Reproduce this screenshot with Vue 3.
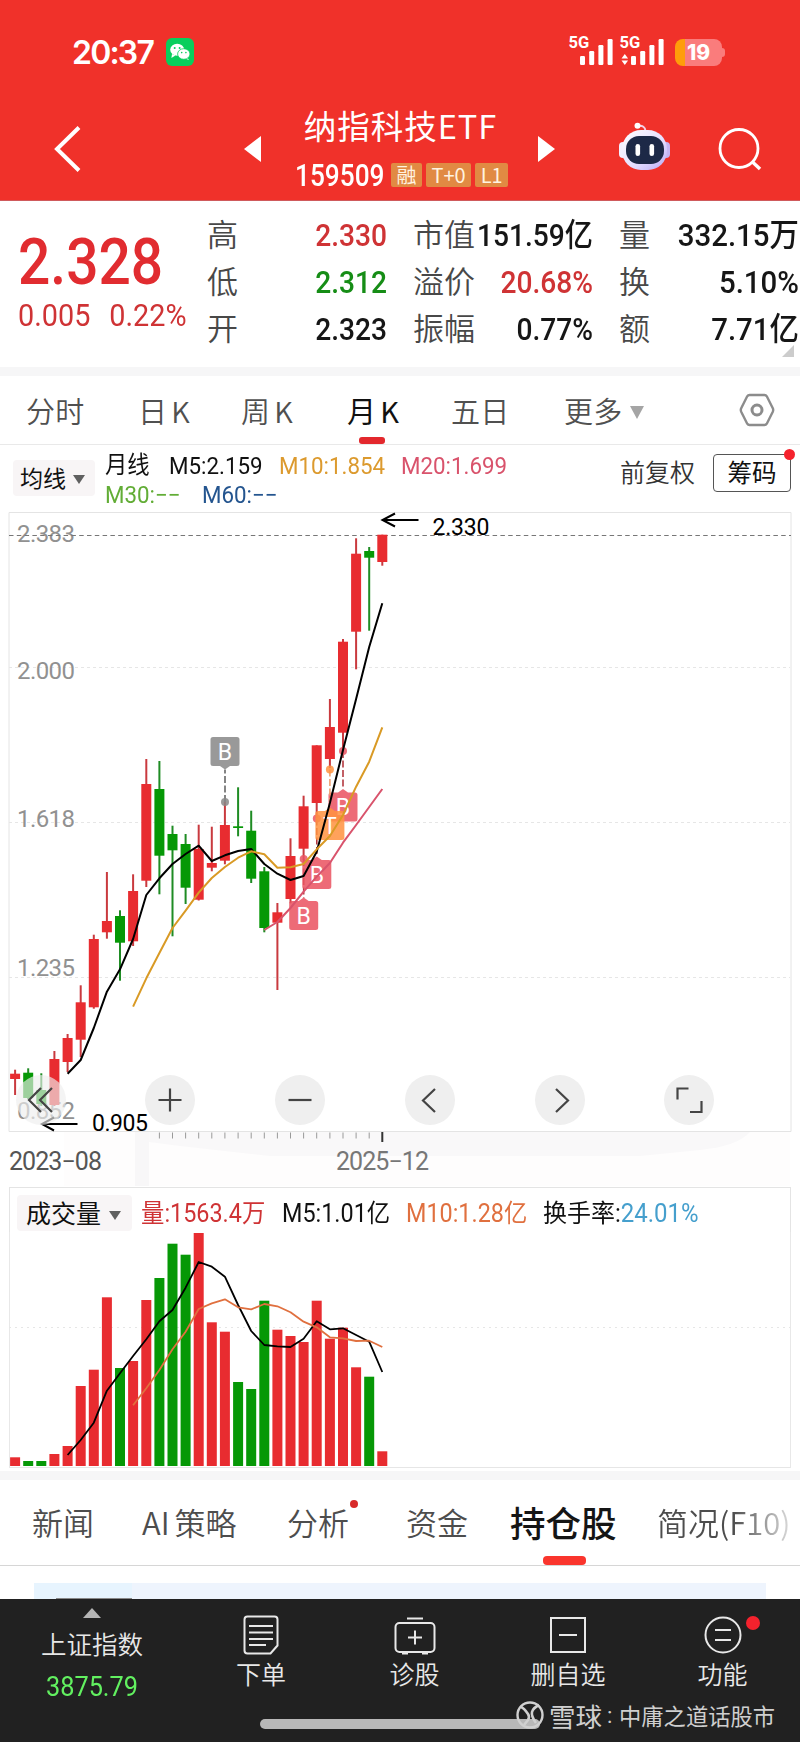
<template>
  <div class="page">
    <header class="header">
      <div class="status-bar">
        <span class="clock">20:37</span>
        <svg class="wechat" width="28" height="28" viewBox="0 0 28 28">
          <rect width="28" height="28" rx="6" fill="#08ce5c" />
          <ellipse cx="11.2" cy="11.8" rx="7" ry="6" fill="#fff" />
          <path d="M6 16l-.6 4 4-2.6zM21 19l2 3-4-1.6z" fill="#fff" />
          <ellipse cx="17.8" cy="16" rx="6.2" ry="5.3" fill="#fff" stroke="#08ce5c" stroke-width=".8" />
          <g fill="#08ce5c">
            <circle cx="8.7" cy="10" r="1" />
            <circle cx="13.6" cy="10" r="1" />
            <circle cx="15.7" cy="14.6" r=".8" />
            <circle cx="19.9" cy="14.6" r=".8" />
          </g>
        </svg>
        <svg class="signals" width="100" height="44" viewBox="564 29 100 44">
          <g fill="#fff">
            <text x="568.5" y="47.5" class="net">5G</text>
            <text x="619.5" y="47.5" class="net">5G</text>
            <template v-for="offset in [580, 631]" :key="offset">
              <rect
                v-for="(top, i) in [56, 51, 45, 39]"
                :key="i"
                :x="offset + i * 9.2"
                :y="top"
                width="5"
                :height="65 - top"
                rx="1.2"
              />
            </template>
            <path d="M621.5 58.5l3.3-4.5 3.3 4.5zM621.5 60.5l3.3 4.5 3.3-4.5z" />
          </g>
        </svg>
        <div class="battery"><span>19</span></div>
      </div>

      <div class="nav">
        <svg class="back" width="30" height="50" viewBox="0 0 30 50">
          <path d="M26 3.500L4 25L26 46.500" fill="none" stroke="#fff" stroke-width="4" />
        </svg>
        <svg class="prev" width="18" height="28" viewBox="0 0 18 28">
          <path d="M0 14L17 1v26z" fill="#fff" />
        </svg>
        <div class="title-box">
          <div class="title">纳指科技ETF</div>
          <div class="code-row">
            <span class="code"><span>159509</span></span>
            <i class="tag">融</i><i class="tag">T+0</i><i class="tag">L1</i>
          </div>
        </div>
        <svg class="next" width="18" height="28" viewBox="0 0 18 28">
          <path d="M17 14L0 1v26z" fill="#fff" />
        </svg>
        <svg class="robot" width="52" height="50" viewBox="0 0 52 50">
          <defs>
            <linearGradient id="shell" x1="0" y1="0" x2="1" y2="1">
              <stop offset="0" stop-color="#fff" />
              <stop offset=".6" stop-color="#e3dcff" />
              <stop offset="1" stop-color="#b7a6f2" />
            </linearGradient>
          </defs>
          <path d="M19 4q7-1 7.500 5" fill="none" stroke="#f4cfe4" stroke-width="2" />
          <circle cx="18.500" cy="3.800" r="3" fill="#fff" />
          <rect x="0" y="20" width="8" height="16" rx="4" fill="#f3efff" />
          <rect x="43" y="20" width="8" height="16" rx="4" fill="#c5b4f3" />
          <rect x="3" y="8" width="45" height="40" rx="19" fill="url(#shell)" />
          <rect x="7" y="14" width="38" height="28" rx="13" fill="#1d2947" />
          <rect x="16.500" y="22" width="4.600" height="12" rx="2.300" fill="#fff" />
          <rect x="30.500" y="22" width="4.600" height="12" rx="2.300" fill="#fff" />
        </svg>
        <svg class="search" width="46" height="46" viewBox="0 0 46 46">
          <circle cx="21" cy="22.500" r="19" fill="none" stroke="#fff" stroke-width="2.800" />
          <path d="M34 35.500L42 43" stroke="#fff" stroke-width="3.400" />
        </svg>
      </div>
    </header>

    <section class="quote">
      <div class="price-box">
        <div class="price">2.328</div>
        <div class="change"><span>0.005</span><span>0.22%</span></div>
      </div>
      <div v-for="(col, c) in quoteColumns" :key="c" class="quote-col">
        <div v-for="item in col" :key="item.label" class="quote-item">
          <span class="quote-label">{{ item.label }}</span>
          <span class="quote-value" :class="item.tone">{{ item.value }}</span>
        </div>
      </div>
      <i class="fold"></i>
    </section>

    <nav class="periods">
      <span v-for="p in periods" :key="p.text" class="period" :class="{ active: p.active }">
        {{ p.text }}<em v-if="p.k">K</em>
      </span>
      <span class="period more">更多<i class="caret"></i></span>
      <svg width="36" height="34" viewBox="0 0 36 34" fill="none" stroke="#8c8c8c">
        <path d="M10.500 2h15q1.500 0 2.300 1.300l6 12q.8 1.700 0 3.400l-6 12q-.8 1.300-2.300 1.300h-15q-1.500 0-2.300-1.300l-6-12q-.8-1.700 0-3.400l6-12Q9 2 10.500 2z" stroke-width="2.400" />
        <circle cx="18" cy="17" r="5" stroke-width="3" />
      </svg>
    </nav>

    <section class="ma-bar">
      <div class="picker">均线<i class="caret dark"></i></div>
      <div class="ma-list">
        <div class="ma-row">
          <span class="ma-name">月线</span>
          <span class="m5">M5:2.159</span>
          <span class="m10">M10:1.854</span>
          <span class="m20">M20:1.699</span>
        </div>
        <div class="ma-row">
          <span class="m30">M30:−−</span>
          <span class="m60">M60:−−</span>
        </div>
      </div>
      <span class="adjust">前复权</span>
      <div class="chips">筹码<i class="dot"></i></div>
    </section>

    <section class="kline">
      <svg width="800" height="675" viewBox="0 512 800 675">
        <!-- area under the axis -->
        <path d="M64 1132H790V1186H64z" fill="#fefdfd" />
        <path d="M135 1132H149V1186H135z" fill="#f8f7f8" />
        <path d="M149 1132H750Q738 1146 700 1150L640 1156H270L180 1146L149 1142z" fill="#f9f8f9" />

        <path d="M9 512.500H791V1131.500H9z" fill="none" stroke="#e4e4e4" />
        <path d="M9 667.500H790M9 822.500H790M9 977.500H790" stroke="#e6e6e6" stroke-dasharray="3 3" />
        <g class="axis">
          <text v-for="l in priceLabels" :key="l.text" x="17" :y="l.y" textLength="58">{{ l.text }}</text>
        </g>
        <path d="M9 535.500H791" stroke="#777" stroke-dasharray="4.500 3.300" />

        <g v-for="(k, i) in candles" :key="i" :fill="tone(k)">
          <rect :x="cx(i) - 1" :y="k[3]" width="2" :height="k[4] - k[3]" :fill="wick(k)" />
          <rect :x="cx(i) - 5" :y="k[1]" width="10" :height="k[2] - k[1]" />
        </g>

        <g v-for="m in markers" :key="m.x" :fill="m.color">
          <path :d="`M${m.x} ${m.dot}V${m.tip}`" :stroke="m.line" stroke-width="1.600" stroke-dasharray="7 2.500" />
          <circle :cx="m.x" :cy="m.dot" r="4" fill-opacity=".85" />
          <path :d="bubble(m)" fill-opacity=".86" />
          <text class="mark" :x="m.x" :y="m.tip + (m.down ? -9.5 : 26)">{{ m.text }}</text>
        </g>

        <polyline :points="line(ma5, 4)" class="curve" stroke="#000" />
        <polyline :points="line(ma10, 9)" class="curve" stroke="#d99a25" />
        <polyline :points="line(ma20, 19)" class="curve" stroke="#d9536c" />

        <g fill="none" stroke="#000" stroke-width="2">
          <path d="M418.500 520H383M395 513.500L382.500 520L395 526.500" />
          <path d="M77.500 1124H42M54 1117.500L42 1124L54 1130.500" />
        </g>
        <text class="note" x="432.500" y="535" textLength="57">2.330</text>
        <text class="note" x="92" y="1130.500" textLength="56">0.905</text>

        <path v-for="i in 17" :key="i" :d="`M${cx(i + 10)} 1132.500V1138.500`" stroke="#999" />
        <path :d="`M${cx(28)} 1132V1142`" stroke="#333" stroke-width="2" />
        <text class="date" x="9" y="1169.500" textLength="93" fill="#555">2023−08</text>
        <text class="date" x="336" y="1169.500" textLength="93" fill="#777">2025−12</text>
      </svg>
      <div class="tools">
        <span v-for="(d, i) in toolIcons" :key="i" class="tool">
          <svg width="50" height="50" viewBox="0 0 50 50">
            <path :d="d" fill="none" stroke="#444" stroke-width="2.200" />
          </svg>
        </span>
      </div>
    </section>

    <section class="volume">
      <div class="volume-bar">
        <div class="picker">成交量<i class="caret dark"></i></div>
        <span class="v-total">量:1563.4万</span>
        <span class="v-m5">M5:1.01亿</span>
        <span class="v-m10">M10:1.28亿</span>
        <span class="v-rate">换手率:<b>24.01%</b></span>
      </div>
      <svg width="800" height="236" viewBox="0 1232 800 236">
        <path d="M9 1327.500H790" stroke="#e6e6e6" stroke-dasharray="2 4" />
        <rect
          v-for="(top, i) in volumes"
          :key="i"
          :x="cx(i) - 5"
          :y="top"
          width="10"
          :height="1466 - top"
          :fill="tone(candles[i])"
        />
        <polyline :points="line(vol5, 4)" class="curve thin" stroke="#000" />
        <polyline :points="line(vol10, 9)" class="curve thin" stroke="#e0703f" />
      </svg>
    </section>

    <nav class="sections">
      <span v-for="s in sections" :key="s" class="section" :class="{ active: s === '持仓股', faded: s === '简况(F10)' }">
        {{ s }}<i v-if="s === '分析'" class="dot"></i>
      </span>
    </nav>
    <div class="holdings"><div class="holdings-card"><i></i></div></div>

    <footer class="footer">
      <div class="index">
        <i class="up"></i>
        <span class="index-name">上证指数</span>
        <span class="index-value">3875.79</span>
      </div>
      <div class="action">
        <svg width="44" height="42" viewBox="0 0 44 42">
          <path d="M8.500 2.500h27q3 0 3 3v26l-7 8h-23q-3 0-3-3v-31q0-3 3-3z" />
          <path d="M10 12h24M10 18.500h24M10 25h24M10 31h17" />
        </svg>
        <span>下单</span>
      </div>
      <div class="action">
        <svg width="44" height="42" viewBox="0 0 44 42">
          <rect x="2.500" y="9" width="39" height="29" rx="4" />
          <path d="M14 4.500h16M9 39.500h6M29 39.500h6M22 16.500v14M15 23.500h14" />
        </svg>
        <span>诊股</span>
      </div>
      <div class="action">
        <svg width="44" height="42" viewBox="0 0 44 42">
          <rect x="5" y="4" width="34" height="34" />
          <path d="M13 21h18" />
        </svg>
        <span>删自选</span>
      </div>
      <div class="action">
        <svg width="44" height="42" viewBox="0 0 44 42">
          <circle cx="22" cy="21" r="17.500" />
          <path d="M14 16h16M14 26h16" />
        </svg>
        <span>功能</span>
        <i class="dot"></i>
      </div>
      <i class="home-indicator"></i>
      <div class="watermark">
        <svg width="30" height="30" viewBox="0 0 30 30" fill="none" stroke="#d0d0d0">
          <circle cx="15" cy="15" r="12.500" stroke-width="2.400" />
          <path d="M6 7q3 1 7 7q2 3 0 6l-4 5M24 5q-6 3-7 7q-1 4 4 11" stroke-width="2.600" />
        </svg>
        <b>雪球</b><span class="colon">:</span><span>中庸之道话股市</span>
      </div>
    </footer>
  </div>
</template>

<script setup>
const quoteColumns = [
  [
    { label: "高", value: "2.330", tone: "red" },
    { label: "低", value: "2.312", tone: "green" },
    { label: "开", value: "2.323" },
  ],
  [
    { label: "市值", value: "151.59亿" },
    { label: "溢价", value: "20.68%", tone: "red" },
    { label: "振幅", value: "0.77%" },
  ],
  [
    { label: "量", value: "332.15万" },
    { label: "换", value: "5.10%" },
    { label: "额", value: "7.71亿" },
  ],
];

const periods = [
  { text: "分时" },
  { text: "日", k: true },
  { text: "周", k: true },
  { text: "月", k: true, active: true },
  { text: "五日" },
];
const sections = ["新闻", "AI 策略", "分析", "资金", "持仓股", "简况(F10)"];

const priceLabels = [
  { text: "2.383", y: 542 },
  { text: "2.000", y: 679 },
  { text: "1.618", y: 827 },
  { text: "1.235", y: 976 },
  { text: "0.852", y: 1119 },
];

// [direction, body top, body bottom, wick top, wick bottom]
const candles = [
  ["r", 1073.7, 1079, 1069.7, 1095],
  ["g", 1072.7, 1098, 1068.3, 1099],
  ["g", 1090, 1104, 1073.3, 1106],
  ["r", 1059, 1105, 1051, 1106],
  ["r", 1038, 1062, 1034, 1072],
  ["r", 1002.3, 1039.7, 985.3, 1057],
  ["r", 939, 1007.3, 934.7, 1008.7],
  ["r", 921, 932.3, 872, 938.7],
  ["g", 916, 942.7, 910.3, 980.7],
  ["r", 891, 941.3, 874.3, 946],
  ["r", 784, 880.7, 759, 887],
  ["g", 789, 855.7, 761, 894.3],
  ["g", 834, 850.3, 825.7, 936.3],
  ["g", 844, 887.7, 834, 904],
  ["r", 849, 899.7, 824.7, 900.5],
  ["r", 863, 867.7, 826.7, 871.3],
  ["r", 825, 860.7, 802, 864.3],
  ["g", 826.3, 828, 787.3, 836.3],
  ["g", 830.7, 878.7, 810.7, 883],
  ["g", 871.3, 928, 867, 932.3],
  ["r", 912.3, 922.7, 903, 990],
  ["r", 856, 899, 838.3, 903.3],
  ["r", 806.3, 848.7, 795.7, 860],
  ["r", 745.3, 803, 745.3, 818],
  ["r", 727, 759, 699, 768],
  ["r", 641.7, 732.7, 639, 750],
  ["r", 553.7, 631.7, 538.3, 669.3],
  ["g", 551, 557.7, 547, 630.7],
  ["r", 534.7, 562, 534.7, 565.7],
];

const ma5 = [
  1073.7, 1060, 1028, 991.7, 969.3, 939, 895, 878.3, 864, 854, 845.7, 861, 855.3, 851, 849, 864, 873.7, 880, 876,
  851.7, 803, 750, 699, 647, 603.3,
];
const ma10 = [
  1006.7, 978.3, 953, 928, 910.7, 892.7, 878, 867, 857.7, 851.3, 854.3, 867.7, 867.3, 864, 849.3, 836, 815, 786.7,
  761.7, 727.3,
];
const ma20 = [930, 922, 908, 891.7, 876.7, 863, 842.7, 825, 807, 789];

const volumes = [
  1457.3, 1461, 1461, 1454, 1446, 1386, 1369.7, 1297.3, 1368, 1361, 1300, 1278, 1243.7, 1254.7, 1233, 1322.3, 1331.7,
  1382, 1389, 1300.7, 1329.7, 1336, 1342, 1300.7, 1338.7, 1327.7, 1367.3, 1376.7, 1451.3,
];
const vol5 = [
  1455, 1440, 1422.7, 1390.7, 1373.3, 1356, 1339.3, 1321.3, 1310, 1287.7, 1262, 1266.7, 1276.7, 1305, 1331, 1345,
  1346.3, 1347, 1338.7, 1321.3, 1329.3, 1328.3, 1335, 1341.7, 1372,
];
const vol10 = [
  1405.3, 1388.3, 1370, 1349.3, 1331.7, 1309, 1303.3, 1299.3, 1307.3, 1309.3, 1304, 1306.3, 1312.3, 1321.7, 1327.3,
  1337.3, 1338.3, 1341, 1340.7, 1347,
];

// buy / T trade marks
const markers = [
  { text: "B", x: 225, dot: 802, tip: 769.5, down: true, color: "#888", line: "#666" },
  { text: "B", x: 303.7, dot: 859, tip: 897.5, color: "#ea5361", line: "#b33940" },
  { text: "B", x: 343, dot: 751, tip: 789, color: "#ea5361", line: "#b33940" },
  { text: "B", x: 316.8, dot: 818.5, tip: 856.5, color: "#ea5361", line: "#b33940" },
  { text: "T", x: 329.9, dot: 769.5, tip: 807.5, color: "#ff9340", line: "#f0a070" },
];

const toolIcons = [
  "M25 13L13 25L25 37M36 13L24 25L36 37",
  "M25 13.500V36.500M13.500 25H36.500",
  "M13.500 25H36.500",
  "M30 14L18 25.500L30 37",
  "M21 14L33 25.500L21 37",
  "M13.500 24.500V13.500H24.500M37.500 26V37H26",
];

const cx = (i) => Math.round((15.1 + i * 13.115) * 10) / 10;
const tone = (k) => (k[0] === "r" ? "#e82c30" : "#069806");
const wick = (k) => (k[0] === "r" ? "#c93a3f" : "#1f8c24");
const line = (values, start) => values.map((y, i) => `${cx(i + start)},${y}`).join(" ");

const bubble = ({ x, tip, down }) => {
  const s = down ? -1 : 1;
  const near = tip + 3.5 * s;
  const far = tip + 32.5 * s;
  return `M${x} ${tip}L${x + 5} ${near}H${x + 12}Q${x + 14.5} ${near} ${x + 14.5} ${near + 2.5 * s}V${far - 2.5 * s}Q${x + 14.5} ${far} ${x + 12} ${far}H${x - 12}Q${x - 14.5} ${far} ${x - 14.5} ${far - 2.5 * s}V${near + 2.5 * s}Q${x - 14.5} ${near} ${x - 12} ${near}H${x - 5}Z`;
};
</script>

<style>
body {
  margin: 0;
  background: #fff;
}
</style>

<style scoped>
.page {
  width: 800px;
  height: 1742px;
  overflow: hidden;
  background: #fff;
  color: #111;
  font-family: Roboto, "Noto Sans CJK SC", sans-serif;
  font-weight: 400;
  white-space: nowrap;
}

.page * {
  box-sizing: border-box;
}

i,
b,
em {
  font-style: normal;
  font-weight: inherit;
}

svg {
  display: block;
  flex: none;
}

/* header */
.header {
  height: 201px;
  background: #f0312a;
  border-bottom: 1px solid #cf5a5c;
  color: #fff;
}

.status-bar {
  display: flex;
  align-items: center;
  height: 104px;
  padding-left: 72px;
}

.clock {
  width: 94px;
  font-family: Inter, sans-serif;
  font-size: 32px;
  font-weight: 600;
  letter-spacing: -1.8px;
}

.signals {
  margin-left: 370px;
  margin-top: -2px;
}

.net {
  font: 700 16.5px Roboto, sans-serif;
}

.battery {
  position: relative;
  width: 47px;
  height: 27px;
  margin-left: 11px;
  border-radius: 8px;
  background: linear-gradient(90deg, #ff9d0a 10px, #fa7c7c 10px);
  text-align: center;
  font: 800 21px/27px Inter, sans-serif;
}

.battery::after {
  content: "";
  position: absolute;
  right: -3px;
  top: 9px;
  width: 3px;
  height: 9px;
  border-radius: 0 3px 3px 0;
  background: #fa7c7c;
}

.nav {
  display: flex;
  align-items: center;
  height: 96px;
  padding-left: 53px;
}

.prev {
  margin-left: 161px;
}

.back,
.prev,
.next {
  margin-top: -7px;
}

.title-box {
  width: 275px;
  height: 96px;
}

.title {
  height: 49px;
  padding-left: 2px;
  line-height: 42px;
  font-size: 32.5px;
  letter-spacing: 1px;
  text-align: center;
}

.title,
.tag {
  font-family: "Noto Sans CJK SC", sans-serif;
  font-weight: 400;
}

.code-row {
  display: flex;
  align-items: center;
  gap: 4px;
  padding-left: 33px;
  height: 44px;
}

.code {
  width: 92px;
  font-size: 30.5px;
  font-weight: 500;
}

.code span {
  display: inline-block;
  transform: scaleX(0.86);
  transform-origin: left;
}

.tag {
  height: 24px;
  padding: 0 5.5px;
  border-radius: 2px;
  background: #e18a43;
  color: #fff3e0;
  font-size: 20px;
  line-height: 23px;
}

.next {
  margin-left: 1px;
}

.robot {
  margin-left: 63px;
  margin-top: -10px;
}

.search {
  margin-left: 47px;
  margin-top: -7px;
}

/* quote */
.quote {
  position: relative;
  display: flex;
  height: 175px;
  border-bottom: 9px solid #f6f6f7;
}

.price-box {
  width: 207px;
  padding: 27px 0 0 18px;
  color: #e12c30;
}

.price {
  height: 67px;
  font-size: 65px;
  font-weight: 500;
  line-height: 68px;
  transform: scaleX(0.875);
  transform-origin: left;
}

.change {
  display: flex;
  gap: 21px;
  color: #cf3335;
  font-size: 32px;
  line-height: 40px;
  transform: scaleX(0.9);
  transform-origin: left;
}

.quote-col {
  padding-top: 11px;
}

.quote-col:nth-child(2) {
  width: 180px;
}

.quote-col:nth-child(3) {
  width: 180px;
  margin-left: 26px;
}

.quote-col:nth-child(4) {
  width: 180px;
  margin-left: 26px;
}

.quote-item {
  display: flex;
  justify-content: space-between;
  align-items: center;
  height: 46.7px;
}

.quote-label {
  color: #484848;
  font-family: "Noto Sans CJK SC", sans-serif;
  font-size: 31px;
  font-weight: 350;
  line-height: 42px;
  margin-top: -4px;
}

.quote-value {
  width: 0;
  direction: rtl;
  unicode-bidi: plaintext;
  display: flex;
  justify-content: flex-start;
  color: #161616;
  font-size: 32px;
  font-weight: 500;
  line-height: 46px;
  transform: scaleX(0.88);
  transform-origin: right;
}

.quote-col:nth-child(4) .quote-value {
  transform: scaleX(0.92);
}

.quote-value.red {
  color: #cf3335;
}

.quote-value.green {
  color: #168d16;
}

.fold {
  position: absolute;
  right: 6px;
  bottom: 10px;
  border-left: 12px solid transparent;
  border-bottom: 12px solid #ccc;
}

/* period tabs */
.periods {
  display: grid;
  grid-template-columns: 112px 103px 106px 104px 113px 175px 36px;
  align-items: center;
  height: 69px;
  padding-left: 26px;
  border-bottom: 1px solid #e9e9e9;
}

.period {
  position: relative;
  color: #505050;
  font: 350 29px/66px "Noto Sans CJK SC", sans-serif;
  letter-spacing: 0.3px;
}

.period em {
  margin-left: 4px;
}

.period.active {
  color: #111;
  font-weight: 400;
}

.period.active::after {
  content: "";
  position: absolute;
  left: 12px;
  bottom: -1px;
  width: 26px;
  height: 7px;
  border-radius: 3px;
  background: #e3282d;
}

.caret {
  display: inline-block;
  margin-left: 7px;
  border: 7.5px solid transparent;
  border-top: 13px solid #a5a5a5;
  border-bottom: 0;
  vertical-align: 4px;
}

.caret.dark {
  border-width: 9px 6.5px 0;
  border-top-color: #606060;
  vertical-align: 3px;
}

/* moving averages */
.ma-bar {
  display: flex;
  height: 67px;
  padding: 9px 9px 0 13px;
}

.picker {
  height: 36px;
  margin-top: 6px;
  padding-left: 7px;
  border-radius: 4px;
  background: #f8f5f6;
  font: 400 23px/34px "Noto Sans CJK SC", sans-serif;
}

.ma-bar .picker {
  width: 82px;
}

.ma-list {
  width: 526px;
  padding: 0 0 0 10px;
}

.ma-row {
  display: flex;
  height: 29px;
  font-size: 23.5px;
  line-height: 25px;
}

.ma-row span {
  transform: scaleX(0.95);
  transform-origin: left;
}

.ma-name {
  width: 64px;
  line-height: 22px;
}

.m5 {
  width: 110px;
}

.m10 {
  width: 122px;
  color: #dc9a2e;
}

.m20 {
  color: #d9536c;
}

.m30 {
  width: 97px;
  color: #62ad36;
}

.m60 {
  color: #24558f;
}

.adjust {
  width: 93px;
  margin-left: -1px;
  color: #333;
  font: 350 25px/35px "Noto Sans CJK SC", sans-serif;
}

.chips {
  position: relative;
  flex: none;
  width: 78px;
  height: 38px;
  border: 1px solid #555;
  border-radius: 4px;
  text-align: center;
  font: 400 24.5px/34px "Noto Sans CJK SC", sans-serif;
}

.dot {
  position: absolute;
  width: 11px;
  height: 11px;
  border-radius: 50%;
  background: #f5222d;
}

.chips .dot {
  right: -5px;
  top: -6px;
}

/* k line */
.kline {
  position: relative;
  height: 675px;
}

.axis {
  fill: #919191;
  font-size: 24px;
}

.date {
  font-size: 25px;
}

.note {
  font: 400 23px Roboto, sans-serif;
}

.mark {
  fill: #fff;
  font-size: 23px;
  text-anchor: middle;
}

.curve {
  fill: none;
  stroke-width: 2;
  stroke-linejoin: round;
}

.curve.thin {
  stroke-width: 1.8;
}

.tools {
  position: absolute;
  left: 15.5px;
  top: 563px;
  display: flex;
  gap: 79.8px;
}

.tool {
  width: 50px;
  height: 50px;
  border-radius: 50%;
  background: #efefef;
}

.tool:first-child {
  background: rgba(238, 238, 238, 0.65);
}

/* volume */
.volume {
  height: 293px;
  border-bottom: 9px solid #f6f6f7;
  background: linear-gradient(#e6e6e6, #e6e6e6) 9px 280px / 782px 1px no-repeat;
}

.volume-bar {
  display: flex;
  align-items: center;
  height: 45px;
  margin: 0 9px;
  padding-left: 8px;
  border: 1px solid #e4e4e4;
  border-bottom: 0;
  font-size: 25px;
}

.volume-bar span {
  margin-top: 2px;
  transform: scaleX(0.935);
  transform-origin: left;
}

.volume-bar .picker {
  width: 115px;
  margin: 6px 9px 0 -1px;
  padding-left: 9px;
  font-size: 25px;
}

.volume-bar .caret {
  margin-left: 8px;
}

.volume svg {
  background: linear-gradient(#e8e8e8, #e8e8e8) 9px 0 / 1px 100% no-repeat,
    linear-gradient(#e8e8e8, #e8e8e8) 790px 0 / 1px 100% no-repeat;
}

.v-total {
  width: 141px;
  color: #cf3335;
}

.v-m5 {
  width: 124px;
}

.v-m10 {
  width: 137px;
  color: #e0703f;
}

.volume-bar .v-rate {
  transform: scaleX(0.96);
}

.v-rate b {
  color: #459fcd;
}

/* section tabs */
.sections {
  display: grid;
  grid-template-columns: 110px 145px 119px 104px 147px 1fr;
  height: 86px;
  padding-left: 32px;
  border-bottom: 1px solid #d6d6d6;
}

.section {
  position: relative;
  color: #4d4d4d;
  font: 350 31px/83px "Noto Sans CJK SC", sans-serif;
  word-spacing: -2px;
}

.section.active {
  color: #151515;
  font-size: 35.5px;
  font-weight: 500;
}

.section.active::after {
  content: "";
  position: absolute;
  left: 33px;
  bottom: 0;
  width: 43px;
  height: 9px;
  border-radius: 4px;
  background: #fa352d;
}

.section.faded {
  background: linear-gradient(90deg, #4d4d4d 76px, #ddd 134px);
  background-clip: text;
  color: transparent;
}

.section .dot {
  left: 63px;
  top: 20px;
  width: 8px;
  height: 8px;
  background: #d82a2a;
}

.holdings {
  height: 33px;
  padding: 17px 34px 0;
}

.holdings-card {
  position: relative;
  height: 16px;
  background: linear-gradient(90deg, #e7f4fe 98px, #eef4fd 98px);
}

.holdings-card i {
  position: absolute;
  left: 22px;
  bottom: 0;
  width: 76px;
  height: 1px;
  background: #888;
}

/* footer */
.footer {
  position: relative;
  display: grid;
  grid-template-columns: 184px 154px 153px 154px 1fr;
  height: 143px;
  background: #212121;
  color: #e8e8e8;
  font-family: Roboto, "Noto Sans CJK SC", sans-serif;
}

.index {
  display: flex;
  flex-direction: column;
  align-items: center;
  padding-top: 9px;
}

.up {
  border: 9px solid transparent;
  border-top: 0;
  border-bottom: 10px solid #b5b5b5;
}

.index-name {
  margin-top: 8px;
  font-size: 25.5px;
  font-weight: 350;
  line-height: 38px;
}

.index-value {
  margin-top: 6px;
  color: #62f060;
  font-size: 27.5px;
  line-height: 34px;
  transform: scaleX(0.92);
}

.action {
  position: relative;
  display: flex;
  flex-direction: column;
  align-items: center;
  padding-top: 15px;
  font-size: 25px;
  font-weight: 350;
  line-height: 39px;
}

.action svg {
  fill: none;
  stroke: #e8e8e8;
  stroke-width: 2;
}

.action .dot {
  left: 101px;
  top: 17px;
  width: 14px;
  height: 14px;
}

.home-indicator {
  position: absolute;
  left: 260px;
  top: 120px;
  width: 280px;
  height: 10px;
  border-radius: 5px;
  background: #b8b8b8;
}

.watermark {
  position: absolute;
  left: 515px;
  top: 100px;
  display: flex;
  align-items: center;
  height: 32px;
  color: #cfcfcf;
  font-size: 22.3px;
}

.watermark b {
  margin-left: 4px;
  font-size: 26.5px;
}

.watermark .colon {
  width: 17px;
  padding-left: 5px;
}
</style>
